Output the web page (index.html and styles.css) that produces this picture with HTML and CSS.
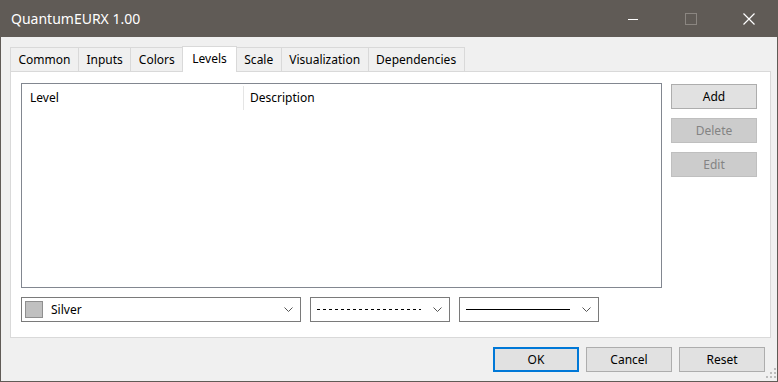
FILE: index.html
```html
<!DOCTYPE html>
<html lang="en">
<head>
  <meta charset="UTF-8" />
  <title>QuantumEURX 1.00</title>
  <link rel="stylesheet" href="styles.css">
</head>
<body>
  <div class="window">
    <div class="titlebar">
      <span class="title">QuantumEURX 1.00</span>
      <div class="caption">
        <span class="cap-btn">
          <svg width="12" height="12" viewBox="0 0 12 12"><line x1="1" y1="6.5" x2="11" y2="6.5" stroke="#fff" stroke-width="1"/></svg>
        </span>
        <span class="cap-btn">
          <svg width="12" height="12" viewBox="0 0 12 12"><rect x="0.5" y="0.5" width="11" height="11" fill="none" stroke="#8b8681" stroke-width="1"/></svg>
        </span>
        <span class="cap-btn">
          <svg width="12" height="12" viewBox="0 0 12 12"><path d="M0.5 0.5 L11.5 11.5 M11.5 0.5 L0.5 11.5" stroke="#fff" stroke-width="1.2"/></svg>
        </span>
      </div>
    </div>

    <div class="client">
      <div class="tabs">
        <span class="tab">Common</span>
        <span class="tab">Inputs</span>
        <span class="tab">Colors</span>
        <span class="tab active">Levels</span>
        <span class="tab">Scale</span>
        <span class="tab">Visualization</span>
        <span class="tab">Dependencies</span>
      </div>

      <div class="panel">
        <div class="levels-row">
          <div class="listview">
            <div class="lv-header">
              <span class="col col-level">Level</span>
              <span class="col col-desc">Description</span>
            </div>
          </div>
          <div class="side-btns">
            <button class="btn">Add</button>
            <button class="btn" disabled>Delete</button>
            <button class="btn" disabled>Edit</button>
          </div>
        </div>

        <div class="combos">
          <div class="combo combo-color">
            <span class="swatch"></span>
            <span class="combo-text">Silver</span>
            <svg class="chev" width="9" height="5" viewBox="0 0 9 5"><polyline points="0.5,0.5 4.5,4.5 8.5,0.5" fill="none" stroke="#555" stroke-width="1"/></svg>
          </div>
          <div class="combo combo-style">
            <span class="dashes"></span>
            <svg class="chev" width="9" height="5" viewBox="0 0 9 5"><polyline points="0.5,0.5 4.5,4.5 8.5,0.5" fill="none" stroke="#555" stroke-width="1"/></svg>
          </div>
          <div class="combo combo-style">
            <span class="solid"></span>
            <svg class="chev" width="9" height="5" viewBox="0 0 9 5"><polyline points="0.5,0.5 4.5,4.5 8.5,0.5" fill="none" stroke="#555" stroke-width="1"/></svg>
          </div>
        </div>
      </div>

      <div class="footer">
        <button class="btn default">OK</button>
        <button class="btn">Cancel</button>
        <button class="btn">Reset</button>
      </div>

      <svg class="grip" width="11" height="11" viewBox="0 0 11 11">
        <rect x="8" y="0" width="2" height="2" fill="#bcbcbc"/>
        <rect x="4" y="4" width="2" height="2" fill="#bcbcbc"/>
        <rect x="8" y="4" width="2" height="2" fill="#bcbcbc"/>
        <rect x="0" y="8" width="2" height="2" fill="#bcbcbc"/>
        <rect x="4" y="8" width="2" height="2" fill="#bcbcbc"/>
        <rect x="8" y="8" width="2" height="2" fill="#bcbcbc"/>
      </svg>
    </div>
  </div>
</body>
</html>
```

FILE: styles.css
```css
body {
  margin: 0;
  font-family: "Noto Sans", sans-serif;
  font-size: 12px;
  color: #000;
}
.window {
  width: 778px;
  height: 382px;
  box-sizing: border-box;
  border: 1px solid #605b56;
  border-top: none;
  background: #f0f0f0;
  display: flex;
  flex-direction: column;
}
.titlebar {
  height: 37px;
  flex: none;
  background: #605b56;
  display: flex;
  align-items: center;
  justify-content: space-between;
  margin: 0 -1px;
}
.title {
  color: #fff;
  font-size: 14px;
  padding-left: 11px;
  padding-bottom: 1px;
}
.caption {
  display: flex;
  height: 100%;
}
.cap-btn {
  width: 58px;
  display: flex;
  align-items: center;
  justify-content: center;
}
.client {
  flex: 1;
  position: relative;
  padding: 8px 6px 0 9px;
  display: flex;
  flex-direction: column;
}
.tabs {
  display: flex;
  align-items: flex-end;
  height: 26px;
  position: relative;
  z-index: 1;
}
.tab {
  height: 24px;
  box-sizing: border-box;
  line-height: 24px;
  padding: 0 7.5px;
  border: 1px solid #d9d9d9;
  border-bottom: none;
  border-left: none;
  background: #f0f0f0;
}
.tab:first-child {
  border-left: 1px solid #d9d9d9;
}
.tab.active {
  height: 26px;
  line-height: 23px;
  background: #fff;
  border-left: 1px solid #d9d9d9;
  margin-left: -1px;
  padding: 0 9px;
  margin-bottom: -1px;
}
.panel {
  height: 267px;
  box-sizing: border-box;
  background: #fff;
  border: 1px solid #d9d9d9;
  padding: 11px 12px 0 10px;
}
.levels-row {
  display: flex;
  gap: 9px;
}
.listview {
  width: 641px;
  height: 205px;
  box-sizing: border-box;
  border: 1px solid #828790;
}
.lv-header {
  display: flex;
  height: 24px;
  align-items: center;
  margin-top: 2px;
}
.col-level {
  width: 222px;
  padding-left: 8px;
  box-sizing: border-box;
  border-right: 1px solid #e5e5e5;
  height: 100%;
  line-height: 24px;
}
.col-desc {
  padding-left: 6px;
  line-height: 24px;
}
.side-btns {
  display: flex;
  flex-direction: column;
  gap: 9px;
  padding-top: 1px;
}
.btn {
  width: 86px;
  height: 25px;
  box-sizing: border-box;
  background: #e1e1e1;
  border: 1px solid #adadad;
  font-family: "Noto Sans", sans-serif;
  font-size: 12px;
  color: #000;
  padding: 0;
}
.btn:disabled {
  background: #cccccc;
  border-color: #bfbfbf;
  color: #838383;
}
.btn.default {
  border: 2px solid #0078d7;
}
.combos {
  display: flex;
  gap: 9px;
  margin-top: 9px;
}
.combo {
  height: 25px;
  box-sizing: border-box;
  border: 1px solid #7a7a7a;
  display: flex;
  align-items: center;
  padding: 0 7px 0 3px;
}
.combo-color {
  width: 280px;
}
.combo-style {
  width: 140px;
  padding-left: 6px;
}
.swatch {
  width: 16px;
  height: 15px;
  background: #c0c0c0;
  border: 1px solid #8f8f8f;
}
.combo-text {
  flex: 1;
  padding-left: 8px;
}
.dashes {
  flex: 1;
  height: 1px;
  margin-right: 12px;
  background: repeating-linear-gradient(90deg, #000 0 3px, transparent 3px 6px);
}
.solid {
  flex: 1;
  height: 1px;
  margin-right: 12px;
  background: #000;
}
.chev {
  flex: none;
}
.footer {
  display: flex;
  justify-content: flex-end;
  gap: 7px;
  padding: 9px 6px 0 0;
}
.grip {
  position: absolute;
  right: 0;
  bottom: 2px;
}
```
